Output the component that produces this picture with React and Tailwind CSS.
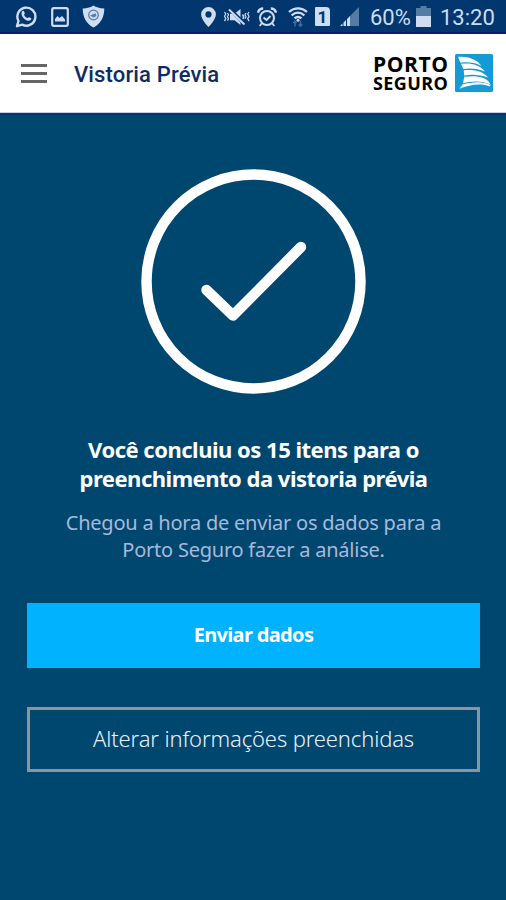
// Vistoria Prévia — confirmation screen shown once every item is filled in

function WhatsappIcon() {
  return (
    <svg className="w-[22px] h-[23px]" viewBox="0 0 22 23" fill="none">
      <path d="M2 21.2l1.5-5.2A9 9 0 1 1 7.200 19.600z" stroke="currentColor" strokeWidth="2.4" strokeLinejoin="round" />
      <path d="M7.300 6.200c.7-.7 1.500-.5 1.800.2l.7 1.800c.2.6-.9 1.300-.7 1.700.7 1.500 1.800 2.500 3.300 3.100.5.200 1.100-1.100 1.700-.8l1.800.9c.6.300.4 1.400-.2 2-1.300 1.200-3.600.8-5.900-.9-2.400-1.800-4.600-5.600-2.500-8z" fill="currentColor" />
    </svg>
  );
}

function ImageIcon() {
  return (
    <svg className="w-[18px] h-[20px]" viewBox="0 0 18 20" fill="none">
      <rect x="1.200" y="1.200" width="15.600" height="17.600" rx="1.500" stroke="currentColor" strokeWidth="2.200" />
      <path d="M4 14.500v-2.500l2.500-3 2 2 2.500-2 3 3.500v2z" fill="currentColor" />
    </svg>
  );
}

function ShieldIcon() {
  return (
    <svg className="w-[23px] h-[23px]" viewBox="0 0 23 23">
      <path d="M11.500.500c2.500 1.800 6 2.800 10.800 3-.1 8.500-3.300 15-10.800 19C4 18.500.8 12 .7 3.500c4.800-.2 8.300-1.200 10.800-3z" fill="#cfdcf2" />
      <circle cx="11.500" cy="10" r="4.800" fill="none" stroke="#557cac" strokeWidth="1.200" />
      <path d="M8 10.500l5.500-2.200 1 2.700-3 1.500z" fill="#557cac" />
    </svg>
  );
}

function PinIcon() {
  return (
    <svg className="w-[15px] h-[20px]" viewBox="0 0 15 20">
      <path fillRule="evenodd" d="M7.500 0A7.400 7.400 0 0 0 .1 7.400C.1 12.500 7.500 20 7.500 20s7.400-7.500 7.400-12.600A7.400 7.400 0 0 0 7.500 0zm0 4.300a3.100 3.100 0 1 1 0 6.200 3.100 3.100 0 0 1 0-6.200z" fill="currentColor" />
    </svg>
  );
}

function VibrateMuteIcon() {
  return (
    <svg className="w-[28px] h-[18px]" viewBox="0 0 28 18" fill="none">
      <path d="M7 5.800h4.500L17.500 1v16l-6-4.700H7z" fill="currentColor" />
      <path d="M7 1l15 15.500" stroke="#01366f" strokeWidth="3.500" />
      <path d="M6 1.500l15.500 15" stroke="currentColor" strokeWidth="1.800" />
      <path d="M19.500 6.500c1.300 1.500 1.300 3 .5 4.500" stroke="currentColor" strokeWidth="1.500" />
      <path d="M1.500 4l1.300 2-1.300 2.300 1.300 2.300-1.300 2.500M4.500 5l1 1.800-1 2 1 2-1 2M26 4l-1.300 2L26 8.300l-1.300 2.300 1.300 2.500M23 5l-1 1.800 1 2-1 2" stroke="currentColor" strokeWidth="1.200" />
    </svg>
  );
}

function AlarmIcon() {
  return (
    <svg className="w-[20px] h-[20px]" viewBox="0 0 20 20" fill="none" stroke="currentColor">
      <circle cx="10" cy="11" r="7" strokeWidth="2" />
      <path d="M1 5.800C1.500 3.300 3.500 1.500 6.200 1.500M19 5.800c-.5-2.500-2.500-4.300-5.200-4.300" strokeWidth="2.400" />
      <path d="M6.500 10.500l3 2.500 4-4M5 16l-2.300 3M15 16l2.300 3" strokeWidth="1.800" />
    </svg>
  );
}

function WifiIcon() {
  return (
    <svg className="w-[20px] h-[20px]" viewBox="0 0 20 20" fill="none">
      <path d="M1 5c5.500-4.800 12.500-4.800 18 0M3.600 8.300c4-3.300 8.800-3.300 12.800 0M6.500 11.300c2.200-1.600 4.800-1.600 7 0" stroke="currentColor" strokeWidth="2.300" />
      <circle cx="10" cy="13.300" r="1.500" fill="currentColor" />
      <path d="M7 19.500v-5M5.300 16L7 14l1.500 2M12.500 14v5M10.800 17.300l1.700 2 1.700-2" stroke="#3f6a99" strokeWidth="1.600" />
    </svg>
  );
}

function SignalIcon() {
  return (
    <svg className="w-[19px] h-[19px]" viewBox="0 0 19 19">
      <path d="M10 9L19 0v19h-9z" fill="#547ca5" />
      <path d="M0 19l2.500-2.500V19zM3.500 19v-3.500L6 13v6zM7 19v-7l3-3v10z" fill="currentColor" />
    </svg>
  );
}

function BatteryIcon() {
  return (
    <svg className="w-[15px] h-[21px]" viewBox="0 0 15 21">
      <path d="M4.500 0h6v2H15v19H0V2h4.500z" fill="#547ca5" />
      <path d="M0 10h15v11H0z" fill="currentColor" />
    </svg>
  );
}

function PortoLogo() {
  return (
    <div className="flex items-center">
      <div className="w-[82px] font-['Open_Sans',sans-serif] font-bold text-black">
        <div className="text-[21px] leading-[19px] tracking-[0.6px]">PORTO</div>
        <div className="text-[18px] leading-[18px] tracking-[0.4px]">SEGURO</div>
      </div>
      <svg className="w-[38px] h-[38px]" viewBox="0 0 38 38">
        <rect width="38" height="38" rx="1.500" fill="#159bd3" />
        <g fill="#fff">
          <path d="M3 3C12 2.200 21.500 5 26.500 12 20 8.500 12.500 7.800 5.500 8.700z" />
          <path d="M6 9.800c9-1.300 19 .8 24 7.700-7.500-3.200-15-3.600-21.700-2.500z" />
          <path d="M8.700 16.300C17.500 15 28.500 17 33 23.500c-8-3-16.500-3.300-23.800-2z" />
          <path d="M9.300 22.800C19 21.200 32.500 22 35.500 30.500 27 26.500 17.500 26.800 8 29.300z" />
          <path d="M7.500 30.600c9.500-2.600 20-3.600 28.200.4l-1.200 1.500C26 29 15 30.500 4.500 34.800z" />
        </g>
      </svg>
    </div>
  );
}

function StatusBar() {
  return (
    <div className="h-[34px] bg-[#01366f] border-b-2 border-[#071d65] text-[#cfdcf2] flex items-center pl-[15px] pt-px font-['Roboto',sans-serif] text-[22px] leading-none">
      <WhatsappIcon />
      <div className="ml-[14px] flex"><ImageIcon /></div>
      <div className="ml-[13px] flex"><ShieldIcon /></div>

      <div className="ml-[96px] flex"><PinIcon /></div>
      <div className="ml-[7px] flex"><VibrateMuteIcon /></div>
      <div className="ml-[6px] flex"><AlarmIcon /></div>
      <div className="ml-[11px] flex"><WifiIcon /></div>
      <div className="ml-[7px] w-[15px] h-[19px] rounded-[1px] rounded-tr-[4px] bg-[#cfdcf2] text-[#01366f] text-[17px] font-bold leading-[20px] text-center">1</div>
      <div className="ml-[10px] flex"><SignalIcon /></div>
      <span className="ml-[11px] w-[42px] mt-[3px]">60%</span>
      <div className="ml-[4px] flex"><BatteryIcon /></div>
      <span className="ml-[9px] mt-[3px]">13:20</span>
    </div>
  );
}

export default function App() {
  return (
    <div className="w-[506px] h-[900px] overflow-hidden flex flex-col bg-[#00476f] font-['Noto_Sans',sans-serif]">
      <StatusBar />

      {/* app bar */}
      <header className="h-[79px] shrink-0 bg-white border-b border-[#c5cde8] flex items-center pl-[21px] pr-[13px]">
        <button className="flex flex-col gap-[5px] w-[26px]" aria-label="Menu">
          <span className="h-[3px] bg-[#666666]" />
          <span className="h-[3px] bg-[#666666]" />
          <span className="h-[3px] bg-[#666666]" />
        </button>
        <h1 className="ml-[27px] mt-[3px] flex-1 font-['Roboto',sans-serif] font-medium text-[22px] tracking-[0.15px] leading-none text-[#0c2c66]">
          Vistoria Prévia
        </h1>
        <PortoLogo />
      </header>

      <main className="flex-1 border-t-2 border-[#06386b] flex flex-col items-center pl-[27px] pr-[26px] pt-[54px] text-center">
        <svg className="w-[225px] h-[225px] shrink-0" viewBox="0 0 225 225" fill="none" stroke="#fff">
          <circle cx="112.500" cy="112.500" r="107" strokeWidth="10.500" />
          <path d="M65.500 121l26.500 25.500L160 78" strokeWidth="10.500" strokeLinecap="round" strokeLinejoin="round" />
        </svg>

        <h2 className="mt-[41px] text-[22px] leading-[29px] tracking-[-0.5px] font-bold text-white whitespace-nowrap">
          Você concluiu os 15 itens para o<br />
          preenchimento da vistoria prévia
        </h2>
        <p className="mt-[16px] text-[20px] leading-[27px] tracking-[-0.23px] text-[#a8b9dc] whitespace-nowrap">
          Chegou a hora de enviar os dados para a<br />
          Porto Seguro fazer a análise.
        </p>

        <button className="mt-[40px] w-full h-[65px] pb-[2px] shrink-0 bg-[#00b2ff] text-white text-[20px] tracking-[-0.65px] font-bold">
          Enviar dados
        </button>
        <button className="mt-[39px] w-full h-[65px] pb-[2px] shrink-0 border-[3px] border-[#8e939d] text-[#e9f1ff] text-[22px] tracking-[-0.13px] font-light">
          Alterar informações preenchidas
        </button>
      </main>
    </div>
  );
}
